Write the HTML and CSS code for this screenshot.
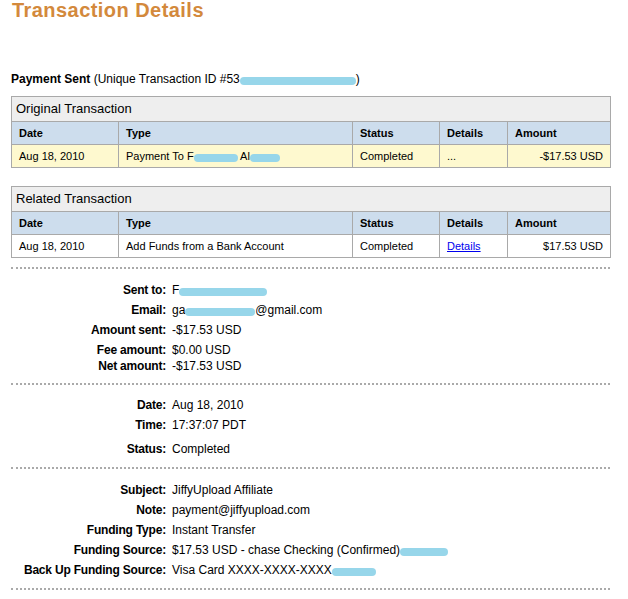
FILE: index.html
```html
<!DOCTYPE html>
<html>
<head>
<meta charset="utf-8">
<title>Transaction Details</title>
<link rel="stylesheet" href="styles.css">
</head>
<body>
<div class="page">
  <h1 class="title">Transaction Details</h1>
  <p class="sent-line"><b>Payment Sent</b> (Unique Transaction ID #53<span class="scribble w116"></span>)</p>

  <table class="txn">
    <colgroup><col class="c-date"><col class="c-type"><col class="c-status"><col class="c-details"><col class="c-amount"></colgroup>
    <tr><th class="cap" colspan="5">Original Transaction</th></tr>
    <tr class="head"><th>Date</th><th>Type</th><th>Status</th><th>Details</th><th>Amount</th></tr>
    <tr class="row hl"><td>Aug 18, 2010</td><td>Payment To F<span class="scribble w44"></span> Al<span class="scribble w30"></span></td><td>Completed</td><td>...</td><td class="amt">-$17.53 USD</td></tr>
  </table>

  <table class="txn second">
    <colgroup><col class="c-date"><col class="c-type"><col class="c-status"><col class="c-details"><col class="c-amount"></colgroup>
    <tr><th class="cap" colspan="5">Related Transaction</th></tr>
    <tr class="head"><th>Date</th><th>Type</th><th>Status</th><th>Details</th><th>Amount</th></tr>
    <tr class="row"><td>Aug 18, 2010</td><td>Add Funds from a Bank Account</td><td>Completed</td><td><a href="#" class="link">Details</a></td><td class="amt">$17.53 USD</td></tr>
  </table>

  <div class="section s1">
    <div class="kv"><span class="k">Sent to:</span><span class="v">F<span class="scribble w88"></span></span></div>
    <div class="kv"><span class="k">Email:</span><span class="v">ga<span class="scribble w70"></span>@gmail.com</span></div>
    <div class="kv"><span class="k">Amount sent:</span><span class="v">-$17.53 USD</span></div>
    <div class="kv"><span class="k">Fee amount:</span><span class="v">$0.00 USD</span></div>
    <div class="kv tight"><span class="k">Net amount:</span><span class="v">-$17.53 USD</span></div>
  </div>

  <div class="section s2">
    <div class="kv"><span class="k">Date:</span><span class="v">Aug 18, 2010</span></div>
    <div class="kv"><span class="k">Time:</span><span class="v">17:37:07 PDT</span></div>
    <div class="kv tall"><span class="k">Status:</span><span class="v">Completed</span></div>
  </div>

  <div class="section s3">
    <div class="kv"><span class="k">Subject:</span><span class="v">JiffyUpload Affiliate</span></div>
    <div class="kv"><span class="k">Note:</span><span class="v">payment@jiffyupload.com</span></div>
    <div class="kv"><span class="k">Funding Type:</span><span class="v">Instant Transfer</span></div>
    <div class="kv"><span class="k">Funding Source:</span><span class="v">$17.53 USD - chase Checking (Confirmed)<span class="scribble w48"></span></span></div>
    <div class="kv"><span class="k">Back Up Funding Source:</span><span class="v">Visa Card XXXX-XXXX-XXXX<span class="scribble w44"></span></span></div>
  </div>
  <div class="rule"></div>
</div>
</body>
</html>
```

FILE: styles.css
```css
html, body {
  margin: 0;
  padding: 0;
  background: #ffffff;
}
body {
  font-family: "Liberation Sans", Arial, sans-serif;
  color: #000000;
}
.page {
  margin-left: 11px;
  width: 599px;
}
.title {
  margin: 0 0 0 1px;
  font-size: 20px;
  line-height: 20px;
  font-weight: bold;
  letter-spacing: 0.45px;
  color: #d3893c;
}
.sent-line {
  margin: 52px 0 0 0;
  font-size: 12px;
  line-height: 14px;
}
.scribble {
  display: inline-block;
  height: 8px;
  border-radius: 4px;
  background: #97d6ea;
  vertical-align: -2px;
}
.w116 { width: 116px; }
.w44 { width: 44px; }
.w30 { width: 30px; }
.w88 { width: 88px; }
.w70 { width: 70px; }
.w48 { width: 48px; }

.txn {
  margin-top: 10px;
  width: 599px;
  border-collapse: collapse;
  table-layout: fixed;
  font-size: 11px;
}
.txn.second {
  margin-top: 18px;
}
.c-date { width: 107px; }
.c-type { width: 234px; }
.c-status { width: 87px; }
.c-details { width: 68px; }
.c-amount { width: 103px; }
.txn th, .txn td {
  border: 1px solid #a9a9a9;
  padding: 4px 7px;
  line-height: 14px;
  text-align: left;
  white-space: nowrap;
  overflow: hidden;
}
.txn th.cap {
  background: #eeeeee;
  font-size: 13px;
  font-weight: normal;
  line-height: 16px;
  padding: 4px 4px;
}
.head th {
  background: #cddded;
  font-weight: bold;
}
.row.hl td {
  background: #fef9cf;
}
.txn td.amt {
  text-align: right;
}
.link {
  color: #0000ee;
  text-decoration: underline;
}
.section {
  border-top: 2px dotted #aaaaaa;
  font-size: 12px;
}
.s1 { margin-top: 9px; padding: 11px 0 11px; }
.s2 { padding: 10px 0 4px; }
.s3 { padding: 11px 0 8px; }
.kv {
  display: grid;
  grid-template-columns: 155px 1fr;
  column-gap: 6px;
  line-height: 20px;
  height: 20px;
}
.kv.tight {
  line-height: 12px;
  height: 12px;
}
.kv.tall {
  line-height: 28px;
  height: 28px;
}
.k {
  text-align: right;
  font-weight: bold;
  letter-spacing: -0.2px;
  white-space: nowrap;
}
.v {
  white-space: nowrap;
}
.rule {
  border-top: 2px dotted #aaaaaa;
}
```
